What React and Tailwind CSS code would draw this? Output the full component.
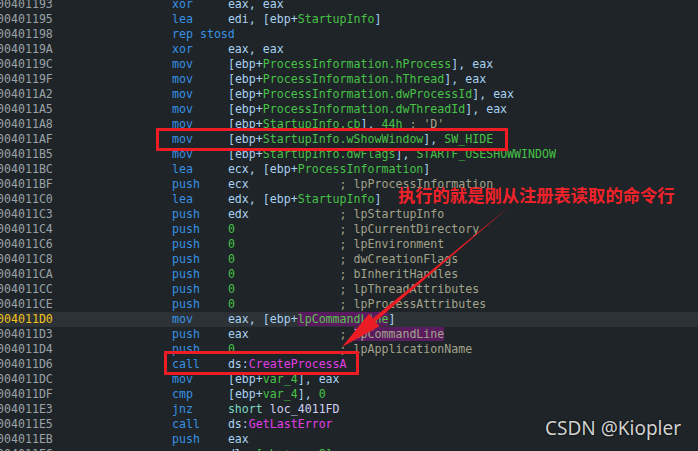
import React from "react";

const C = {
  r: "text-[#a9d2f2]",
  g: "text-[#47c247]",
  n: "text-[#47c247]",
  m: "text-[#e23ce8]",
  c: "text-[#a3a38c]",
  t: "text-[#7fd6c2]",
  l: "text-[#cfcff2]",
  p: "text-[#56c24e] bg-[#5a1c5e]",
  pc: "text-[#a3a38c] bg-[#5a1c5e]",
};

const mem = (name, tail) => [
  ["r", "["],
  ["r", "ebp+"],
  ["g", name],
  ["r", "]" + (tail || "")],
];

const rows = [
  ["00401193", "xor", [["r", "eax, eax"]]],
  ["00401195", "lea", [["r", "edi, "], ...mem("StartupInfo")]],
  ["00401198", "rep stosd", []],
  ["0040119A", "xor", [["r", "eax, eax"]]],
  ["0040119C", "mov", mem("ProcessInformation.hProcess", ", eax")],
  ["0040119F", "mov", mem("ProcessInformation.hThread", ", eax")],
  ["004011A2", "mov", mem("ProcessInformation.dwProcessId", ", eax")],
  ["004011A5", "mov", mem("ProcessInformation.dwThreadId", ", eax")],
  ["004011A8", "mov", [...mem("StartupInfo.cb", ", "), ["n", "44h"], ["c", " ; 'D'"]]],
  ["004011AF", "mov", [...mem("StartupInfo.wShowWindow", ", "), ["g", "SW_HIDE"]]],
  ["004011B5", "mov", [...mem("StartupInfo.dwFlags", ", "), ["g", "STARTF_USESHOWWINDOW"]]],
  ["004011BC", "lea", [["r", "ecx, "], ...mem("ProcessInformation")]],
  ["004011BF", "push", [["r", "ecx"]], "lpProcessInformation"],
  ["004011C0", "lea", [["r", "edx, "], ...mem("StartupInfo")]],
  ["004011C3", "push", [["r", "edx"]], "lpStartupInfo"],
  ["004011C4", "push", [["n", "0"]], "lpCurrentDirectory"],
  ["004011C6", "push", [["n", "0"]], "lpEnvironment"],
  ["004011C8", "push", [["n", "0"]], "dwCreationFlags"],
  ["004011CA", "push", [["n", "0"]], "bInheritHandles"],
  ["004011CC", "push", [["n", "0"]], "lpThreadAttributes"],
  ["004011CE", "push", [["n", "0"]], "lpProcessAttributes"],
  ["004011D0", "mov", [["r", "eax, [ebp+"], ["p", "lpCommandLine"], ["r", "]"]], null, true],
  ["004011D3", "push", [["r", "eax"]], "@lpCommandLine"],
  ["004011D4", "push", [["n", "0"]], "lpApplicationName"],
  ["004011D6", "call", [["r", "ds:"], ["m", "CreateProcessA"]]],
  ["004011DC", "mov", mem("var_4", ", eax")],
  ["004011DF", "cmp", [...mem("var_4", ", "), ["n", "0"]]],
  ["004011E3", "jnz", [["t", "short "], ["l", "loc_4011FD"]]],
  ["004011E5", "call", [["r", "ds:"], ["m", "GetLastError"]]],
  ["004011EB", "push", [["r", "eax"]]],
  ["004011EC", "mov", [["r", "dl, "], ["g", "[ebp+var_8]"]]],
];

function Row({ addr, mn, ops, comment, hl }) {
  const len = ops.reduce((a, o) => a + o[1].length, 0);
  const pad = comment ? " ".repeat(Math.max(1, 16 - len)) : "";
  return (
    <div className={hl ? "flex h-[15px] whitespace-pre bg-[#2c3236]" : "flex h-[15px] whitespace-pre"}>
      <span className={hl ? "ml-[-3px] w-[175px] shrink-0 text-[#f2c21a]" : "ml-[-3px] w-[175px] shrink-0 text-[#9aa2a7]"}>
        {addr}
      </span>
      <span className="w-[55.9px] shrink-0 text-[#3891e4]">{mn}</span>
      <span>
        {ops.map((o, i) => (
          <span key={i} className={C[o[0]]}>
            {o[1]}
          </span>
        ))}
        {comment && <span className={C.c}>{pad + "; "}</span>}
        {comment &&
          (comment.startsWith("@") ? (
            <span className={C.pc}>{comment.slice(1)}</span>
          ) : (
            <span className={C.c}>{comment}</span>
          ))}
      </span>
    </div>
  );
}

export default function App() {
  const tip = [342, 347];
  const start = [510, 206];
  const dx = start[0] - tip[0];
  const dy = start[1] - tip[1];
  const L = Math.hypot(dx, dy);
  const ux = dx / L;
  const uy = dy / L;
  const hl = 42;
  const hw = 8;
  const bx = tip[0] + ux * hl;
  const by = tip[1] + uy * hl;
  const px = -uy;
  const py = ux;
  const head = `${tip[0]},${tip[1]} ${bx + px * hw},${by + py * hw} ${bx - px * hw},${by - py * hw}`;
  const shaft = `${start[0]},${start[1]} ${bx + px * 2},${by + py * 2} ${bx - px * 2},${by - py * 2}`;

  return (
    <div className="relative w-[698px] h-[451px] overflow-hidden bg-[#1e2427] font-['DejaVu_Sans_Mono',monospace] text-[11.6px] leading-[15px]">
      <div className="mt-[-3px] flex flex-col">
        {rows.map((r, i) => (
          <Row key={i} addr={r[0]} mn={r[1]} ops={r[2]} comment={r[3]} hl={r[4]} />
        ))}
      </div>

      <div className="absolute left-[156px] top-[128px] w-[352px] h-[23px] border-[3px] border-[#ee1c24]" />
      <div className="absolute left-[164px] top-[351px] w-[195px] h-[24px] border-[3px] border-[#ee1c24]" />

      <div className="absolute left-[398px] top-[185px] whitespace-nowrap font-['Noto_Sans_CJK_SC',sans-serif] text-[17.3px] leading-[20px] font-bold text-[#f0222a]">
        执行的就是刚从注册表读取的命令行
      </div>

      <svg className="absolute left-0 top-0 pointer-events-none" width="698" height="451" viewBox="0 0 698 451">
        <polygon points={shaft} fill="#ec1c24" />
        <polygon points={head} fill="#ec1c24" />
      </svg>

      <div className="absolute left-[545px] top-[416px] whitespace-nowrap font-['Noto_Sans',sans-serif] text-[19px] leading-[24px] text-[#d2d2d2] [text-shadow:0_0_2px_#000]">
        CSDN @Kiopler
      </div>
    </div>
  );
}
